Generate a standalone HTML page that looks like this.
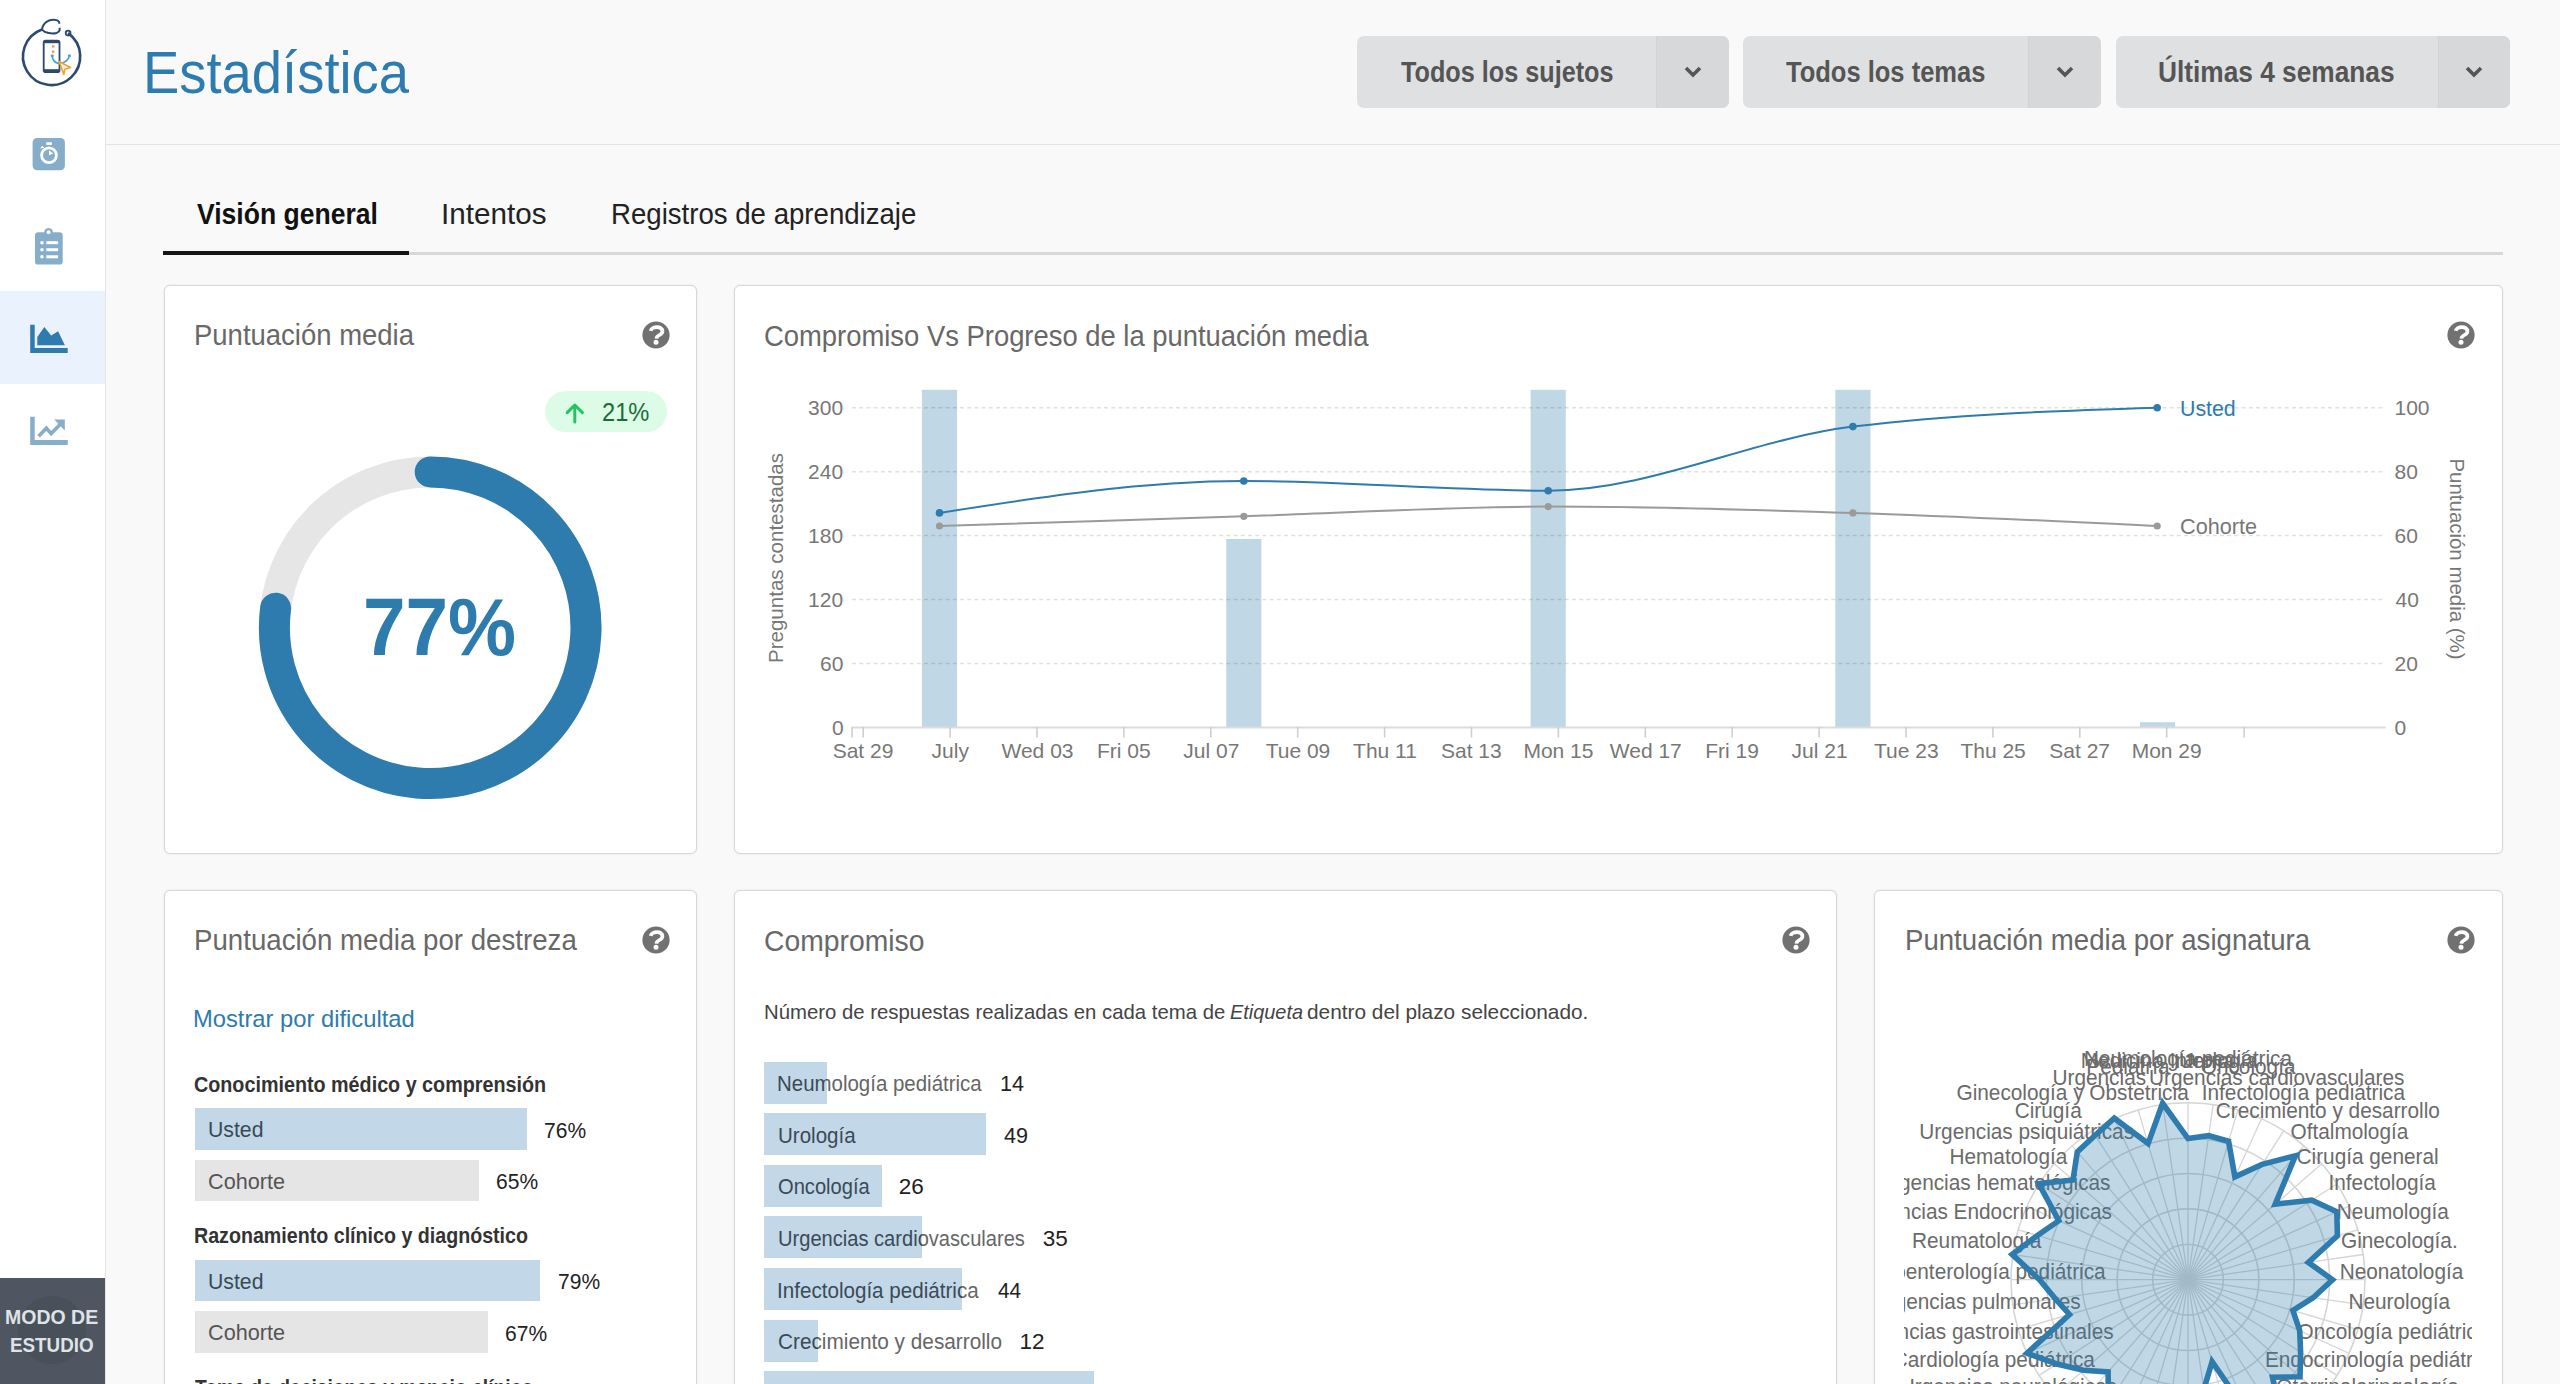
<!DOCTYPE html><html><head><meta charset="utf-8"><title>Estadística</title><style>

*{margin:0;padding:0;box-sizing:border-box}
html,body{width:2560px;height:1384px;overflow:hidden;background:#f9f9f9;font-family:"Liberation Sans",sans-serif}
.a{position:absolute}
.t{position:absolute;white-space:pre;line-height:1;transform-origin:0 0}
.card{position:absolute;background:#fff;border:1px solid #d8d8d8;border-radius:6px;box-shadow:0 0 2px rgba(0,0,0,0.10)}

</style></head><body>
<div class="a" style="left:0;top:0;width:106px;height:1384px;background:#fff;border-right:1px solid #e4e4e4"></div>
<div class="a" style="left:0;top:291px;width:105px;height:93px;background:#eaf2fd"></div>
<svg class="a" style="left:0;top:0" width="105" height="100" viewBox="0 0 105 100">
<path d="M42,29.5 A28.6,28.6 0 1 0 68.1,33.1" fill="none" stroke="#2d4a6e" stroke-width="2.6"/>
<path d="M42,29.6 C43,22.5 49,19.5 54,19.8 C57.5,20 59.5,21.5 59.4,23.8 M42,29.6 C45,33.2 52,34.2 56.5,33 C59.5,32 60,30 59.6,27.8" fill="none" stroke="#2d4a6e" stroke-width="2"/>
<circle cx="68.1" cy="33.1" r="2.4" fill="none" stroke="#2d4a6e" stroke-width="1.8"/>
<rect x="42.8" y="39.7" width="17.6" height="33.4" rx="2.8" fill="#2d4a6e"/>
<rect x="44.6" y="43.2" width="14" height="26" fill="#fff"/>
<rect x="52" y="45.2" width="2.4" height="2.4" fill="#f0a030"/>
<rect x="52" y="50.5" width="2.4" height="2.4" fill="#f0a030"/>
<path d="M52.2,55.6 C52.5,61 56,63 59,63.5 C63,63 68.5,61 69.4,55.6" fill="none" stroke="#4aa3d8" stroke-width="1.6"/>
<circle cx="52.2" cy="55.8" r="1.6" fill="#4aa3d8"/><circle cx="69.4" cy="55.8" r="1.6" fill="#4aa3d8"/>
<path d="M59.2,61.5 L70.5,67.5 L64.8,69.2 L63.8,74.5 Z" fill="#fff3e0" stroke="#f0a030" stroke-width="1.6" stroke-linejoin="round"/>
</svg>
<svg class="a" style="left:0;top:120px" width="105" height="70" viewBox="0 120 105 70">
<rect x="32.6" y="138" width="32.3" height="32.3" rx="4.5" fill="#86aecb"/>
<circle cx="49" cy="155.2" r="7.4" fill="none" stroke="#fff" stroke-width="2.8"/>
<rect x="46" y="142.3" width="6" height="2.6" rx="1.2" fill="#fff"/>
<path d="M40,148.5 L42.2,145.8 L44.3,147.8 Z" fill="#fff"/>
<path d="M49,155.2 L49,150.3 L53.2,153.6 Z" fill="#fff"/>
</svg>
<svg class="a" style="left:0;top:220px" width="105" height="50" viewBox="0 220 105 50">
<rect x="35" y="232.3" width="27.7" height="32.3" rx="3.2" fill="#86aecb"/>
<circle cx="48.6" cy="232.3" r="4.4" fill="#86aecb"/>
<circle cx="48.6" cy="232.2" r="1.9" fill="#fff"/>
<circle cx="42" cy="242.7" r="1.8" fill="#fff"/><circle cx="42" cy="249.7" r="1.8" fill="#fff"/><circle cx="42" cy="256.8" r="1.8" fill="#fff"/>
<rect x="46.3" y="241.2" width="11.8" height="3" fill="#fff"/><rect x="46.3" y="248.2" width="11.8" height="3" fill="#fff"/><rect x="46.3" y="255.3" width="11.8" height="3" fill="#fff"/>
</svg>
<svg class="a" style="left:0;top:310px" width="105" height="60" viewBox="0 310 105 60">
<path d="M30.2,324.7 H34.7 V347.9 H67.7 V352.9 H30.2 Z" fill="#2e7bad"/>
<path d="M37.3,336.9 L44.3,327.1 L51.2,335.6 L58.1,331.2 L64.9,345.3 L37.3,345.3 Z" fill="#2e7bad"/>
</svg>
<svg class="a" style="left:0;top:402px" width="105" height="60" viewBox="0 402 105 60">
<path d="M30.2,416.7 H34.7 V440 H67.7 V445 H30.2 Z" fill="#86aecb"/>
<path d="M38.6,436.3 L46.4,428.2 L51.2,433.6 L60.5,424" fill="none" stroke="#86aecb" stroke-width="3.6"/>
<path d="M54.2,419.4 L64.8,419.4 L64.8,430.4 Z" fill="#86aecb"/>
</svg>
<div class="a" style="left:0;top:1278px;width:105px;height:106px;background:#4f5661"></div>
<div class="a" style="left:18px;top:1296px;width:68px;height:68px;border-radius:50%;background:#48505a"></div>
<div class="a" style="left:106px;top:144px;width:2454px;height:1px;background:#e3e3e3"></div>
<div class="a" style="left:1357px;top:36px;width:372px;height:72px;border-radius:7px;background:#dfe0e1;overflow:hidden"><div class="a" style="left:299px;top:0;width:73px;height:72px;background:#d7d8da;border-left:1px solid #d1d3d5"></div></div>
<svg class="a" style="left:1682.5px;top:64px" width="20" height="16" viewBox="0 0 20 16"><path d="M3,4 L10,11 L17,4" fill="none" stroke="#555" stroke-width="3.6"/></svg>
<div class="a" style="left:1743px;top:36px;width:358px;height:72px;border-radius:7px;background:#dfe0e1;overflow:hidden"><div class="a" style="left:285px;top:0;width:73px;height:72px;background:#d7d8da;border-left:1px solid #d1d3d5"></div></div>
<svg class="a" style="left:2054.5px;top:64px" width="20" height="16" viewBox="0 0 20 16"><path d="M3,4 L10,11 L17,4" fill="none" stroke="#555" stroke-width="3.6"/></svg>
<div class="a" style="left:2116px;top:36px;width:394px;height:72px;border-radius:7px;background:#dfe0e1;overflow:hidden"><div class="a" style="left:322px;top:0;width:72px;height:72px;background:#d7d8da;border-left:1px solid #d1d3d5"></div></div>
<svg class="a" style="left:2464.0px;top:64px" width="20" height="16" viewBox="0 0 20 16"><path d="M3,4 L10,11 L17,4" fill="none" stroke="#555" stroke-width="3.6"/></svg>
<div class="a" style="left:163px;top:252px;width:2340px;height:3px;background:#d8d8d8"></div>
<div class="a" style="left:163px;top:251px;width:246px;height:4px;background:#151515"></div>
<div class="card" style="left:164px;top:285px;width:533px;height:569px"></div>
<div class="card" style="left:734px;top:285px;width:1769px;height:569px"></div>
<div class="card" style="left:164px;top:890px;width:533px;height:530px"></div>
<div class="card" style="left:734px;top:890px;width:1103px;height:530px"></div>
<div class="card" style="left:1874px;top:890px;width:629px;height:530px"></div>
<div class="a" style="left:545px;top:390.5px;width:122px;height:41px;border-radius:20.5px;background:#dcfce7"></div>
<svg class="a" style="left:560px;top:398px" width="30" height="30" viewBox="560 398 30 30"><path d="M574.8,421.9 V405.5 M567.2,412.6 L574.8,405 L582.4,412.6" fill="none" stroke="#22c55e" stroke-width="3" stroke-linecap="round" stroke-linejoin="round"/></svg>
<svg class="a" style="left:164px;top:285px" width="533" height="569" viewBox="164 285 533 569"><circle cx="430.2" cy="627.7" r="155.8" fill="none" stroke="#e6e6e6" stroke-width="31.0"/><path d="M430.2,471.9 A155.8,155.8 0 1 1 275.63,608.17" fill="none" stroke="#2e7bad" stroke-width="31.0" stroke-linecap="round"/></svg>
<svg class="a" style="left:734px;top:285px" width="1769" height="569" viewBox="734 285 1769 569"><rect x="921.9" y="389.8" width="35.2" height="337.6" fill="#c0d8e5"/><rect x="1226.2" y="538.9" width="35.2" height="188.5" fill="#c0d8e5"/><rect x="1530.6" y="389.8" width="35.2" height="337.6" fill="#c0d8e5"/><rect x="1835.3" y="389.8" width="35.2" height="337.6" fill="#c0d8e5"/><rect x="2139.9" y="722.2" width="35.2" height="5.2" fill="#c0d8e5"/><line x1="852" y1="663.5" x2="2385" y2="663.5" stroke="rgba(0,0,0,0.12)" stroke-width="1.5" stroke-dasharray="4,3.2"/><line x1="852" y1="599.6" x2="2385" y2="599.6" stroke="rgba(0,0,0,0.12)" stroke-width="1.5" stroke-dasharray="4,3.2"/><line x1="852" y1="535.6" x2="2385" y2="535.6" stroke="rgba(0,0,0,0.12)" stroke-width="1.5" stroke-dasharray="4,3.2"/><line x1="852" y1="471.7" x2="2385" y2="471.7" stroke="rgba(0,0,0,0.12)" stroke-width="1.5" stroke-dasharray="4,3.2"/><line x1="852" y1="407.8" x2="2385" y2="407.8" stroke="rgba(0,0,0,0.12)" stroke-width="1.5" stroke-dasharray="4,3.2"/><line x1="852" y1="727.4" x2="2385.6" y2="727.4" stroke="#dcdcdc" stroke-width="2"/><line x1="852.1" y1="727" x2="852.1" y2="737.5" stroke="#cfcfcf" stroke-width="1.6"/><line x1="863.2" y1="727" x2="863.2" y2="737.5" stroke="#cfcfcf" stroke-width="1.6"/><line x1="950.1" y1="727" x2="950.1" y2="737.5" stroke="#cfcfcf" stroke-width="1.6"/><line x1="1037.0" y1="727" x2="1037.0" y2="737.5" stroke="#cfcfcf" stroke-width="1.6"/><line x1="1123.9" y1="727" x2="1123.9" y2="737.5" stroke="#cfcfcf" stroke-width="1.6"/><line x1="1210.8" y1="727" x2="1210.8" y2="737.5" stroke="#cfcfcf" stroke-width="1.6"/><line x1="1297.7" y1="727" x2="1297.7" y2="737.5" stroke="#cfcfcf" stroke-width="1.6"/><line x1="1384.6" y1="727" x2="1384.6" y2="737.5" stroke="#cfcfcf" stroke-width="1.6"/><line x1="1471.5" y1="727" x2="1471.5" y2="737.5" stroke="#cfcfcf" stroke-width="1.6"/><line x1="1558.4" y1="727" x2="1558.4" y2="737.5" stroke="#cfcfcf" stroke-width="1.6"/><line x1="1645.3" y1="727" x2="1645.3" y2="737.5" stroke="#cfcfcf" stroke-width="1.6"/><line x1="1732.2" y1="727" x2="1732.2" y2="737.5" stroke="#cfcfcf" stroke-width="1.6"/><line x1="1819.1" y1="727" x2="1819.1" y2="737.5" stroke="#cfcfcf" stroke-width="1.6"/><line x1="1906.0" y1="727" x2="1906.0" y2="737.5" stroke="#cfcfcf" stroke-width="1.6"/><line x1="1992.9" y1="727" x2="1992.9" y2="737.5" stroke="#cfcfcf" stroke-width="1.6"/><line x1="2079.8" y1="727" x2="2079.8" y2="737.5" stroke="#cfcfcf" stroke-width="1.6"/><line x1="2166.7" y1="727" x2="2166.7" y2="737.5" stroke="#cfcfcf" stroke-width="1.6"/><line x1="2244.1" y1="727" x2="2244.1" y2="737.5" stroke="#cfcfcf" stroke-width="1.6"/><path d="M939.5,526.0 C1040.9,522.8 1142.4,519.5 1243.8,516.3 C1345.3,513.1 1446.7,506.6 1548.2,506.6 C1649.8,506.6 1751.3,509.7 1852.9,512.9 C1954.3,516.1 2055.8,521.1 2157.2,526.0" fill="none" stroke="#9a9a9a" stroke-width="2"/><path d="M939.5,512.9 C1040.9,496.9 1142.4,481.0 1243.8,481.0 C1345.3,481.0 1446.7,490.7 1548.2,490.7 C1649.8,490.7 1751.3,439.1 1852.9,426.6 C1954.3,414.1 2055.8,410.9 2157.2,407.8" fill="none" stroke="#2e7bad" stroke-width="2"/><circle cx="939.5" cy="526.0" r="3.6" fill="#9a9a9a"/><circle cx="1243.8" cy="516.3" r="3.6" fill="#9a9a9a"/><circle cx="1548.2" cy="506.6" r="3.6" fill="#9a9a9a"/><circle cx="1852.9" cy="512.9" r="3.6" fill="#9a9a9a"/><circle cx="2157.2" cy="526.0" r="3.6" fill="#9a9a9a"/><circle cx="939.5" cy="512.9" r="3.8" fill="#2e7bad"/><circle cx="1243.8" cy="481.0" r="3.8" fill="#2e7bad"/><circle cx="1548.2" cy="490.7" r="3.8" fill="#2e7bad"/><circle cx="1852.9" cy="426.6" r="3.8" fill="#2e7bad"/><circle cx="2157.2" cy="407.8" r="3.8" fill="#2e7bad"/></svg>
<div class="a" style="left:194.6px;top:1108.3px;width:332.1px;height:41.6px;background:#c2d7e7"></div>
<div class="a" style="left:194.6px;top:1159.7px;width:284.4px;height:41.6px;background:#e5e5e5"></div>
<div class="a" style="left:194.6px;top:1259.8px;width:345.6px;height:41.6px;background:#c2d7e7"></div>
<div class="a" style="left:194.6px;top:1311.2px;width:293.1px;height:41.6px;background:#e5e5e5"></div>
<div class="a" style="left:764px;top:1061.6px;width:63.0px;height:42px;background:#c2d7e7"></div>
<div class="a" style="left:764px;top:1113.2px;width:222.0px;height:42px;background:#c2d7e7"></div>
<div class="a" style="left:764px;top:1164.8px;width:117.8px;height:42px;background:#c2d7e7"></div>
<div class="a" style="left:764px;top:1216.4px;width:157.6px;height:42px;background:#c2d7e7"></div>
<div class="a" style="left:764px;top:1268.0px;width:198.3px;height:42px;background:#c2d7e7"></div>
<div class="a" style="left:764px;top:1319.6px;width:53.5px;height:42px;background:#c2d7e7"></div>
<div class="a" style="left:764px;top:1371.2px;width:329.6px;height:42px;background:#c2d7e7"></div>
<svg class="a" style="left:1875px;top:891px" width="627" height="493" viewBox="1875 891 627 493"><defs><clipPath id="rc"><rect x="1904" y="960" width="568" height="430"/></clipPath></defs><circle cx="2188.0" cy="1279.7" r="35.4" fill="none" stroke="#d5d5d5" stroke-width="1.6"/><circle cx="2188.0" cy="1279.7" r="70.8" fill="none" stroke="#d5d5d5" stroke-width="1.6"/><circle cx="2188.0" cy="1279.7" r="106.2" fill="none" stroke="#d5d5d5" stroke-width="1.6"/><circle cx="2188.0" cy="1279.7" r="141.6" fill="none" stroke="#d5d5d5" stroke-width="1.6"/><circle cx="2188.0" cy="1279.7" r="177.0" fill="none" stroke="#d5d5d5" stroke-width="1.6"/><line x1="2188.0" y1="1279.7" x2="2188.00" y2="1102.70" stroke="#d5d5d5" stroke-width="1.3"/><line x1="2188.0" y1="1279.7" x2="2213.19" y2="1104.50" stroke="#d5d5d5" stroke-width="1.3"/><line x1="2188.0" y1="1279.7" x2="2237.87" y2="1109.87" stroke="#d5d5d5" stroke-width="1.3"/><line x1="2188.0" y1="1279.7" x2="2261.53" y2="1118.70" stroke="#d5d5d5" stroke-width="1.3"/><line x1="2188.0" y1="1279.7" x2="2283.69" y2="1130.80" stroke="#d5d5d5" stroke-width="1.3"/><line x1="2188.0" y1="1279.7" x2="2303.91" y2="1145.93" stroke="#d5d5d5" stroke-width="1.3"/><line x1="2188.0" y1="1279.7" x2="2321.77" y2="1163.79" stroke="#d5d5d5" stroke-width="1.3"/><line x1="2188.0" y1="1279.7" x2="2336.90" y2="1184.01" stroke="#d5d5d5" stroke-width="1.3"/><line x1="2188.0" y1="1279.7" x2="2349.00" y2="1206.17" stroke="#d5d5d5" stroke-width="1.3"/><line x1="2188.0" y1="1279.7" x2="2357.83" y2="1229.83" stroke="#d5d5d5" stroke-width="1.3"/><line x1="2188.0" y1="1279.7" x2="2363.20" y2="1254.51" stroke="#d5d5d5" stroke-width="1.3"/><line x1="2188.0" y1="1279.7" x2="2365.00" y2="1279.70" stroke="#d5d5d5" stroke-width="1.3"/><line x1="2188.0" y1="1279.7" x2="2363.20" y2="1304.89" stroke="#d5d5d5" stroke-width="1.3"/><line x1="2188.0" y1="1279.7" x2="2357.83" y2="1329.57" stroke="#d5d5d5" stroke-width="1.3"/><line x1="2188.0" y1="1279.7" x2="2349.00" y2="1353.23" stroke="#d5d5d5" stroke-width="1.3"/><line x1="2188.0" y1="1279.7" x2="2336.90" y2="1375.39" stroke="#d5d5d5" stroke-width="1.3"/><line x1="2188.0" y1="1279.7" x2="2321.77" y2="1395.61" stroke="#d5d5d5" stroke-width="1.3"/><line x1="2188.0" y1="1279.7" x2="2303.91" y2="1413.47" stroke="#d5d5d5" stroke-width="1.3"/><line x1="2188.0" y1="1279.7" x2="2283.69" y2="1428.60" stroke="#d5d5d5" stroke-width="1.3"/><line x1="2188.0" y1="1279.7" x2="2261.53" y2="1440.70" stroke="#d5d5d5" stroke-width="1.3"/><line x1="2188.0" y1="1279.7" x2="2237.87" y2="1449.53" stroke="#d5d5d5" stroke-width="1.3"/><line x1="2188.0" y1="1279.7" x2="2213.19" y2="1454.90" stroke="#d5d5d5" stroke-width="1.3"/><line x1="2188.0" y1="1279.7" x2="2188.00" y2="1456.70" stroke="#d5d5d5" stroke-width="1.3"/><line x1="2188.0" y1="1279.7" x2="2162.81" y2="1454.90" stroke="#d5d5d5" stroke-width="1.3"/><line x1="2188.0" y1="1279.7" x2="2138.13" y2="1449.53" stroke="#d5d5d5" stroke-width="1.3"/><line x1="2188.0" y1="1279.7" x2="2114.47" y2="1440.70" stroke="#d5d5d5" stroke-width="1.3"/><line x1="2188.0" y1="1279.7" x2="2092.31" y2="1428.60" stroke="#d5d5d5" stroke-width="1.3"/><line x1="2188.0" y1="1279.7" x2="2072.09" y2="1413.47" stroke="#d5d5d5" stroke-width="1.3"/><line x1="2188.0" y1="1279.7" x2="2054.23" y2="1395.61" stroke="#d5d5d5" stroke-width="1.3"/><line x1="2188.0" y1="1279.7" x2="2039.10" y2="1375.39" stroke="#d5d5d5" stroke-width="1.3"/><line x1="2188.0" y1="1279.7" x2="2027.00" y2="1353.23" stroke="#d5d5d5" stroke-width="1.3"/><line x1="2188.0" y1="1279.7" x2="2018.17" y2="1329.57" stroke="#d5d5d5" stroke-width="1.3"/><line x1="2188.0" y1="1279.7" x2="2012.80" y2="1304.89" stroke="#d5d5d5" stroke-width="1.3"/><line x1="2188.0" y1="1279.7" x2="2011.00" y2="1279.70" stroke="#d5d5d5" stroke-width="1.3"/><line x1="2188.0" y1="1279.7" x2="2012.80" y2="1254.51" stroke="#d5d5d5" stroke-width="1.3"/><line x1="2188.0" y1="1279.7" x2="2018.17" y2="1229.83" stroke="#d5d5d5" stroke-width="1.3"/><line x1="2188.0" y1="1279.7" x2="2027.00" y2="1206.17" stroke="#d5d5d5" stroke-width="1.3"/><line x1="2188.0" y1="1279.7" x2="2039.10" y2="1184.01" stroke="#d5d5d5" stroke-width="1.3"/><line x1="2188.0" y1="1279.7" x2="2054.23" y2="1163.79" stroke="#d5d5d5" stroke-width="1.3"/><line x1="2188.0" y1="1279.7" x2="2072.09" y2="1145.93" stroke="#d5d5d5" stroke-width="1.3"/><line x1="2188.0" y1="1279.7" x2="2092.31" y2="1130.80" stroke="#d5d5d5" stroke-width="1.3"/><line x1="2188.0" y1="1279.7" x2="2114.47" y2="1118.70" stroke="#d5d5d5" stroke-width="1.3"/><line x1="2188.0" y1="1279.7" x2="2138.13" y2="1109.87" stroke="#d5d5d5" stroke-width="1.3"/><line x1="2188.0" y1="1279.7" x2="2162.81" y2="1104.50" stroke="#d5d5d5" stroke-width="1.3"/><g clip-path="url(#rc)" font-family="Liberation Sans" fill="#6b6b6b"><text x="0" y="0" font-size="21.51" text-anchor="middle" transform="translate(2188.0,1065.7) scale(0.967,1)">Neumología pediátrica</text><text x="0" y="0" font-size="21.51" text-anchor="middle" transform="translate(2218.4,1067.9) scale(0.967,1)">Urología</text><text x="0" y="0" font-size="21.51" text-anchor="middle" transform="translate(2248.1,1074.3) scale(0.967,1)">Oncología</text><text x="0" y="0" font-size="21.51" text-anchor="middle" transform="translate(2276.7,1084.9) scale(0.967,1)">Urgencias cardiovasculares</text><text x="0" y="0" font-size="21.51" text-anchor="middle" transform="translate(2303.4,1099.5) scale(0.967,1)">Infectología pediátrica</text><text x="0" y="0" font-size="21.51" text-anchor="middle" transform="translate(2327.8,1117.7) scale(0.967,1)">Crecimiento y desarrollo</text><text x="0" y="0" font-size="21.51" text-anchor="middle" transform="translate(2349.4,1139.2) scale(0.967,1)">Oftalmología</text><text x="0" y="0" font-size="21.51" text-anchor="middle" transform="translate(2367.6,1163.5) scale(0.967,1)">Cirugía general</text><text x="0" y="0" font-size="21.51" text-anchor="middle" transform="translate(2382.2,1190.2) scale(0.967,1)">Infectología</text><text x="0" y="0" font-size="21.51" text-anchor="middle" transform="translate(2392.9,1218.7) scale(0.967,1)">Neumología</text><text x="0" y="0" font-size="21.51" text-anchor="middle" transform="translate(2399.3,1248.4) scale(0.967,1)">Ginecología.</text><text x="0" y="0" font-size="21.51" text-anchor="middle" transform="translate(2401.5,1278.7) scale(0.967,1)">Neonatología</text><text x="0" y="0" font-size="21.51" text-anchor="middle" transform="translate(2399.3,1309.0) scale(0.967,1)">Neurología</text><text x="0" y="0" font-size="21.51" text-anchor="middle" transform="translate(2392.9,1338.7) scale(0.967,1)">Oncología pediátrica</text><text x="0" y="0" font-size="21.51" text-anchor="middle" transform="translate(2382.2,1367.2) scale(0.967,1)">Endocrinología pediátrica</text><text x="0" y="0" font-size="21.51" text-anchor="middle" transform="translate(2367.6,1393.9) scale(0.967,1)">Otorrinolaringología</text><text x="0" y="0" font-size="21.51" text-anchor="middle" transform="translate(2349.4,1418.2) scale(0.967,1)">Dermatología</text><text x="0" y="0" font-size="21.51" text-anchor="middle" transform="translate(2327.8,1439.7) scale(0.967,1)">Nefrología</text><text x="0" y="0" font-size="21.51" text-anchor="middle" transform="translate(2303.4,1457.9) scale(0.967,1)">Cardiología</text><text x="0" y="0" font-size="21.51" text-anchor="middle" transform="translate(2276.7,1472.5) scale(0.967,1)">Gastroenterología</text><text x="0" y="0" font-size="21.51" text-anchor="middle" transform="translate(2248.1,1483.1) scale(0.967,1)">Endocrinología</text><text x="0" y="0" font-size="21.51" text-anchor="middle" transform="translate(2218.4,1489.5) scale(0.967,1)">Psiquiatría</text><text x="0" y="0" font-size="21.51" text-anchor="middle" transform="translate(2188.0,1491.7) scale(0.967,1)">Geriatría</text><text x="0" y="0" font-size="21.51" text-anchor="middle" transform="translate(2157.6,1489.5) scale(0.967,1)">Anestesiología</text><text x="0" y="0" font-size="21.51" text-anchor="middle" transform="translate(2127.9,1483.1) scale(0.967,1)">Radiología</text><text x="0" y="0" font-size="21.51" text-anchor="middle" transform="translate(2099.3,1472.5) scale(0.967,1)">Nefrología pediátrica</text><text x="0" y="0" font-size="21.51" text-anchor="middle" transform="translate(2072.6,1457.9) scale(0.967,1)">Neurología pediátrica</text><text x="0" y="0" font-size="21.51" text-anchor="middle" transform="translate(2048.2,1439.7) scale(0.967,1)">Urgencias renales</text><text x="0" y="0" font-size="21.51" text-anchor="middle" transform="translate(2026.6,1418.2) scale(0.967,1)">Urgencias respiratorias</text><text x="0" y="0" font-size="21.51" text-anchor="middle" transform="translate(2008.4,1393.9) scale(0.967,1)">Urgencias neurológicas</text><text x="0" y="0" font-size="21.51" text-anchor="middle" transform="translate(1993.8,1367.2) scale(0.967,1)">Cardiología pediátrica</text><text x="0" y="0" font-size="21.51" text-anchor="middle" transform="translate(1983.1,1338.7) scale(0.967,1)">Urgencias gastrointestinales</text><text x="0" y="0" font-size="21.51" text-anchor="middle" transform="translate(1976.7,1309.0) scale(0.967,1)">Urgencias pulmonares</text><text x="0" y="0" font-size="21.51" text-anchor="middle" transform="translate(1974.5,1278.7) scale(0.967,1)">Gastroenterología pediátrica</text><text x="0" y="0" font-size="21.51" text-anchor="middle" transform="translate(1976.7,1248.4) scale(0.967,1)">Reumatología</text><text x="0" y="0" font-size="21.51" text-anchor="middle" transform="translate(1983.1,1218.7) scale(0.967,1)">Urgencias Endocrinológicas</text><text x="0" y="0" font-size="21.51" text-anchor="middle" transform="translate(1993.8,1190.2) scale(0.967,1)">Urgencias hematológicas</text><text x="0" y="0" font-size="21.51" text-anchor="middle" transform="translate(2008.4,1163.5) scale(0.967,1)">Hematología</text><text x="0" y="0" font-size="21.51" text-anchor="middle" transform="translate(2026.6,1139.2) scale(0.967,1)">Urgencias psiquiátricas</text><text x="0" y="0" font-size="21.51" text-anchor="middle" transform="translate(2048.2,1117.7) scale(0.967,1)">Cirugía</text><text x="0" y="0" font-size="21.51" text-anchor="middle" transform="translate(2072.6,1099.5) scale(0.967,1)">Ginecología y Obstetricia</text><text x="0" y="0" font-size="21.51" text-anchor="middle" transform="translate(2099.3,1084.9) scale(0.967,1)">Urgencias</text><text x="0" y="0" font-size="21.51" text-anchor="middle" transform="translate(2127.9,1074.3) scale(0.967,1)">Pediatría</text><text x="0" y="0" font-size="21.51" text-anchor="middle" transform="translate(2157.6,1067.9) scale(0.967,1)">Medicina Interna</text></g><polygon points="2188.0,1138.6 2208.7,1135.7 2228.6,1141.3 2234.9,1176.9 2262.1,1164.4 2295.4,1155.8 2275.2,1204.1 2311.7,1200.2 2336.8,1211.7 2337.4,1235.8 2308.3,1262.4 2332.5,1279.7 2313.1,1297.7 2292.9,1310.5 2299.7,1330.7 2300.6,1352.0 2300.0,1376.8 2272.5,1377.2 2283.7,1428.6 2251.6,1418.9 2212.1,1361.7 2203.8,1389.6 2188.0,1409.7 2168.1,1418.3 2152.8,1399.6 2125.7,1416.1 2108.5,1403.4 2108.1,1371.9 2083.4,1370.3 2056.8,1364.0 2027.0,1353.2 2069.5,1314.5 2055.4,1298.8 2039.5,1279.7 2012.1,1254.4 2037.4,1235.5 2058.8,1220.7 2038.7,1183.7 2073.0,1180.0 2077.3,1152.0 2095.2,1135.3 2114.3,1118.2 2148.1,1143.6 2162.6,1103.3" fill="rgba(46,123,173,0.3)" stroke="#2e7bad" stroke-width="5.6" stroke-linejoin="miter" stroke-miterlimit="10"/></svg>
<div class="t" style="left:5.44px;top:1307.00px;font-size:20.35px;color:#dfe3e8;font-weight:700;transform:scaleX(0.9583);">MODO DE</div>
<div class="t" style="left:10.29px;top:1336.00px;font-size:19.62px;color:#dfe3e8;font-weight:700;transform:scaleX(0.9593);">ESTUDIO</div>
<div class="t" style="left:142.74px;top:43.00px;font-size:59.59px;color:#2e7bb0;transform:scaleX(0.9129);">Estadística</div>
<div class="t" style="left:1400.70px;top:57.00px;font-size:29.80px;color:#555;font-weight:700;transform:scaleX(0.8464);">Todos los sujetos</div>
<div class="t" style="left:1786.40px;top:57.00px;font-size:29.80px;color:#555;font-weight:700;transform:scaleX(0.8560);">Todos los temas</div>
<div class="t" style="left:2158.42px;top:57.00px;font-size:29.80px;color:#555;font-weight:700;transform:scaleX(0.8816);">Últimas 4 semanas</div>
<div class="t" style="left:197.00px;top:200.00px;font-size:29.07px;color:#111;font-weight:700;transform:scaleX(0.9133);">Visión general</div>
<div class="t" style="left:441.26px;top:200.00px;font-size:29.07px;color:#222;transform:scaleX(1.0198);">Intentos</div>
<div class="t" style="left:611.10px;top:200.00px;font-size:29.07px;color:#222;transform:scaleX(0.9498);">Registros de aprendizaje</div>
<div class="t" style="left:194.45px;top:320.00px;font-size:29.65px;color:#686868;transform:scaleX(0.9271);">Puntuación media</div>
<div class="t" style="left:601.67px;top:400.00px;font-size:25.58px;color:#1d6b3c;transform:scaleX(0.9260);">21%</div>
<div class="t" style="left:362.51px;top:586.00px;font-size:82.27px;color:#2e7bad;font-weight:700;transform:scaleX(0.9294);">77%</div>
<div class="t" style="left:763.88px;top:321.00px;font-size:29.80px;color:#686868;transform:scaleX(0.9195);">Compromiso Vs Progreso de la puntuación media</div>
<div class="t" style="left:808.10px;top:397.00px;font-size:21.00px;color:#777;">300</div>
<div class="t" style="left:808.10px;top:461.00px;font-size:21.00px;color:#777;">240</div>
<div class="t" style="left:808.10px;top:525.00px;font-size:21.00px;color:#777;">180</div>
<div class="t" style="left:808.10px;top:589.00px;font-size:21.00px;color:#777;">120</div>
<div class="t" style="left:820.10px;top:653.00px;font-size:21.00px;color:#777;">60</div>
<div class="t" style="left:832.10px;top:717.00px;font-size:21.00px;color:#777;">0</div>
<div class="t" style="left:2394.50px;top:397.00px;font-size:21.00px;color:#777;">100</div>
<div class="t" style="left:2394.50px;top:461.00px;font-size:21.00px;color:#777;">80</div>
<div class="t" style="left:2394.50px;top:525.00px;font-size:21.00px;color:#777;">60</div>
<div class="t" style="left:2395.50px;top:589.00px;font-size:21.00px;color:#777;">40</div>
<div class="t" style="left:2394.50px;top:653.00px;font-size:21.00px;color:#777;">20</div>
<div class="t" style="left:2394.50px;top:717.00px;font-size:21.00px;color:#777;">0</div>
<div class="t" style="left:832.70px;top:740.00px;font-size:21.00px;color:#777;">Sat 29</div>
<div class="t" style="left:931.60px;top:740.00px;font-size:21.00px;color:#777;">July</div>
<div class="t" style="left:1001.50px;top:740.00px;font-size:21.00px;color:#777;">Wed 03</div>
<div class="t" style="left:1096.90px;top:740.00px;font-size:21.00px;color:#777;">Fri 05</div>
<div class="t" style="left:1183.30px;top:740.00px;font-size:21.00px;color:#777;">Jul 07</div>
<div class="t" style="left:1265.70px;top:740.00px;font-size:21.00px;color:#777;">Tue 09</div>
<div class="t" style="left:1353.10px;top:740.00px;font-size:21.00px;color:#777;">Thu 11</div>
<div class="t" style="left:1441.00px;top:740.00px;font-size:21.00px;color:#777;">Sat 13</div>
<div class="t" style="left:1523.40px;top:740.00px;font-size:21.00px;color:#777;">Mon 15</div>
<div class="t" style="left:1609.80px;top:740.00px;font-size:21.00px;color:#777;">Wed 17</div>
<div class="t" style="left:1705.20px;top:740.00px;font-size:21.00px;color:#777;">Fri 19</div>
<div class="t" style="left:1791.60px;top:740.00px;font-size:21.00px;color:#777;">Jul 21</div>
<div class="t" style="left:1874.00px;top:740.00px;font-size:21.00px;color:#777;">Tue 23</div>
<div class="t" style="left:1960.40px;top:740.00px;font-size:21.00px;color:#777;">Thu 25</div>
<div class="t" style="left:2049.30px;top:740.00px;font-size:21.00px;color:#777;">Sat 27</div>
<div class="t" style="left:2131.70px;top:740.00px;font-size:21.00px;color:#777;">Mon 29</div>
<div class="t" style="left:2180.45px;top:398.00px;font-size:22.53px;color:#2e7bad;transform:scaleX(0.9474);">Usted</div>
<div class="t" style="left:2180.44px;top:516.00px;font-size:22.53px;color:#777;transform:scaleX(0.9615);">Cohorte</div>
<div class="t" style="left:194.33px;top:925.00px;font-size:29.65px;color:#686868;transform:scaleX(0.9330);">Puntuación media por destreza</div>
<div class="t" style="left:192.68px;top:1007.00px;font-size:24.71px;color:#2e7bad;transform:scaleX(0.9614);">Mostrar por dificultad</div>
<div class="t" style="left:193.73px;top:1073.00px;font-size:22.82px;color:#333;font-weight:700;transform:scaleX(0.8652);">Conocimiento médico y comprensión</div>
<div class="t" style="left:193.74px;top:1224.00px;font-size:22.82px;color:#333;font-weight:700;transform:scaleX(0.8611);">Razonamiento clínico y diagnóstico</div>
<div class="t" style="left:207.81px;top:1120.00px;font-size:21.51px;color:#3b4a57;transform:scaleX(0.9870);">Usted</div>
<div class="t" style="left:544.34px;top:1120.00px;font-size:21.80px;color:#222;transform:scaleX(0.9643);">76%</div>
<div class="t" style="left:207.79px;top:1172.00px;font-size:21.51px;color:#555;transform:scaleX(1.0067);">Cohorte</div>
<div class="t" style="left:496.24px;top:1171.00px;font-size:21.80px;color:#222;transform:scaleX(0.9643);">65%</div>
<div class="t" style="left:207.81px;top:1272.00px;font-size:21.51px;color:#3b4a57;transform:scaleX(0.9870);">Usted</div>
<div class="t" style="left:557.84px;top:1271.00px;font-size:21.80px;color:#222;transform:scaleX(0.9643);">79%</div>
<div class="t" style="left:207.79px;top:1323.00px;font-size:21.51px;color:#555;transform:scaleX(1.0067);">Cohorte</div>
<div class="t" style="left:505.04px;top:1323.00px;font-size:21.80px;color:#222;transform:scaleX(0.9643);">67%</div>
<div class="t" style="left:194.60px;top:1376.00px;font-size:22.82px;color:#333;font-weight:700;transform:scaleX(0.8450);">Toma de decisiones y manejo clínico</div>
<div class="t" style="left:763.85px;top:926.00px;font-size:29.80px;color:#686868;transform:scaleX(0.9497);">Compromiso</div>
<div class="t" style="left:763.63px;top:1002.00px;font-size:20.93px;color:#444;transform:scaleX(0.9721);">Número de respuestas realizadas en cada tema de</div>
<div class="t" style="left:1230.00px;top:1002.00px;font-size:20.93px;color:#444;font-style:italic;transform:scaleX(0.9513);">Etiqueta</div>
<div class="t" style="left:1306.50px;top:1002.00px;font-size:20.93px;color:#444;transform:scaleX(0.9954);">dentro del plazo seleccionado.</div>
<div class="a" style="left:827.0px;top:1056.6px;width:500.0px;height:52.0px;overflow:hidden"><div class="t" style="left:-49.92px;top:16.40px;font-size:22.53px;color:#666;transform:scaleX(0.9085);">Neumología pediátrica</div></div>
<div class="a" style="left:764.0px;top:1056.6px;width:63.0px;height:52.0px;overflow:hidden"><div class="t" style="left:13.08px;top:16.40px;font-size:22.53px;color:#3b4a57;transform:scaleX(0.9085);">Neumología pediátrica</div></div>
<div class="t" style="left:1000.34px;top:1073.00px;font-size:22.53px;color:#222;transform:scaleX(0.9583);">14</div>
<div class="a" style="left:986.0px;top:1108.2px;width:500.0px;height:52.0px;overflow:hidden"><div class="t" style="left:-208.01px;top:16.80px;font-size:22.53px;color:#666;transform:scaleX(0.9119);">Urología</div></div>
<div class="a" style="left:764.0px;top:1108.2px;width:222.0px;height:52.0px;overflow:hidden"><div class="t" style="left:13.99px;top:16.80px;font-size:22.53px;color:#3b4a57;transform:scaleX(0.9119);">Urología</div></div>
<div class="t" style="left:1003.80px;top:1125.00px;font-size:22.53px;color:#222;transform:scaleX(0.9583);">49</div>
<div class="a" style="left:881.8px;top:1159.8px;width:500.0px;height:52.0px;overflow:hidden"><div class="t" style="left:-103.79px;top:16.20px;font-size:22.53px;color:#666;transform:scaleX(0.8931);">Oncología</div></div>
<div class="a" style="left:764.0px;top:1159.8px;width:117.8px;height:52.0px;overflow:hidden"><div class="t" style="left:14.01px;top:16.20px;font-size:22.53px;color:#3b4a57;transform:scaleX(0.8931);">Oncología</div></div>
<div class="t" style="left:898.70px;top:1176.00px;font-size:22.53px;color:#222;">26</div>
<div class="a" style="left:921.6px;top:1211.4px;width:500.0px;height:52.0px;overflow:hidden"><div class="t" style="left:-143.59px;top:16.60px;font-size:22.53px;color:#666;transform:scaleX(0.8927);">Urgencias cardiovasculares</div></div>
<div class="a" style="left:764.0px;top:1211.4px;width:157.6px;height:52.0px;overflow:hidden"><div class="t" style="left:14.01px;top:16.60px;font-size:22.53px;color:#3b4a57;transform:scaleX(0.8927);">Urgencias cardiovasculares</div></div>
<div class="t" style="left:1042.70px;top:1228.00px;font-size:22.53px;color:#222;">35</div>
<div class="a" style="left:962.3px;top:1263.0px;width:500.0px;height:52.0px;overflow:hidden"><div class="t" style="left:-185.23px;top:17.00px;font-size:22.53px;color:#666;transform:scaleX(0.9155);">Infectología pediátrica</div></div>
<div class="a" style="left:764.0px;top:1263.0px;width:198.3px;height:52.0px;overflow:hidden"><div class="t" style="left:13.07px;top:17.00px;font-size:22.53px;color:#3b4a57;transform:scaleX(0.9155);">Infectología pediátrica</div></div>
<div class="t" style="left:998.20px;top:1280.00px;font-size:22.53px;color:#222;transform:scaleX(0.9200);">44</div>
<div class="a" style="left:817.5px;top:1314.6px;width:500.0px;height:52.0px;overflow:hidden"><div class="t" style="left:-39.52px;top:16.40px;font-size:22.53px;color:#666;transform:scaleX(0.9228);">Crecimiento y desarrollo</div></div>
<div class="a" style="left:764.0px;top:1314.6px;width:53.5px;height:52.0px;overflow:hidden"><div class="t" style="left:13.98px;top:16.40px;font-size:22.53px;color:#3b4a57;transform:scaleX(0.9228);">Crecimiento y desarrollo</div></div>
<div class="t" style="left:1019.50px;top:1331.00px;font-size:22.53px;color:#222;">12</div>
<div class="t" style="left:1904.82px;top:925.00px;font-size:29.36px;color:#686868;transform:scaleX(0.9403);">Puntuación media por asignatura</div>
<svg class="a" style="left:641.2px;top:319.9px" width="30" height="30" viewBox="-15 -15 30 30"><circle r="13.6" fill="#717171"/><path d="M-5.3,-4.2 C-4.5,-8.6 6.4,-9.6 6.4,-3.6 C6.4,0.2 0.6,-0.2 0.4,3.6" fill="none" stroke="#fff" stroke-width="3.7"/><circle cx="0" cy="7.3" r="2.5" fill="#fff"/></svg>
<svg class="a" style="left:2445.8px;top:319.9px" width="30" height="30" viewBox="-15 -15 30 30"><circle r="13.6" fill="#717171"/><path d="M-5.3,-4.2 C-4.5,-8.6 6.4,-9.6 6.4,-3.6 C6.4,0.2 0.6,-0.2 0.4,3.6" fill="none" stroke="#fff" stroke-width="3.7"/><circle cx="0" cy="7.3" r="2.5" fill="#fff"/></svg>
<div class="t" style="left:775.5px;top:558.4px;width:211.1px;height:20.44px;font-size:20.44px;color:#777;text-align:center;transform:translate(-50%,-50%) rotate(-90deg) scaleX(1.0045);transform-origin:50% 50%">Preguntas contestadas</div>
<div class="t" style="left:2456.5px;top:558.5px;width:203.1px;height:20.44px;font-size:20.44px;color:#777;text-align:center;transform:translate(-50%,-50%) rotate(90deg) scaleX(0.9996);transform-origin:50% 50%">Puntuación media (%)</div>
<svg class="a" style="left:641.0px;top:925.0px" width="30" height="30" viewBox="-15 -15 30 30"><circle r="13.6" fill="#717171"/><path d="M-5.3,-4.2 C-4.5,-8.6 6.4,-9.6 6.4,-3.6 C6.4,0.2 0.6,-0.2 0.4,3.6" fill="none" stroke="#fff" stroke-width="3.7"/><circle cx="0" cy="7.3" r="2.5" fill="#fff"/></svg>
<svg class="a" style="left:1781.2px;top:925.0px" width="30" height="30" viewBox="-15 -15 30 30"><circle r="13.6" fill="#717171"/><path d="M-5.3,-4.2 C-4.5,-8.6 6.4,-9.6 6.4,-3.6 C6.4,0.2 0.6,-0.2 0.4,3.6" fill="none" stroke="#fff" stroke-width="3.7"/><circle cx="0" cy="7.3" r="2.5" fill="#fff"/></svg>
<svg class="a" style="left:2446.0px;top:925.0px" width="30" height="30" viewBox="-15 -15 30 30"><circle r="13.6" fill="#717171"/><path d="M-5.3,-4.2 C-4.5,-8.6 6.4,-9.6 6.4,-3.6 C6.4,0.2 0.6,-0.2 0.4,3.6" fill="none" stroke="#fff" stroke-width="3.7"/><circle cx="0" cy="7.3" r="2.5" fill="#fff"/></svg>
</body></html>
